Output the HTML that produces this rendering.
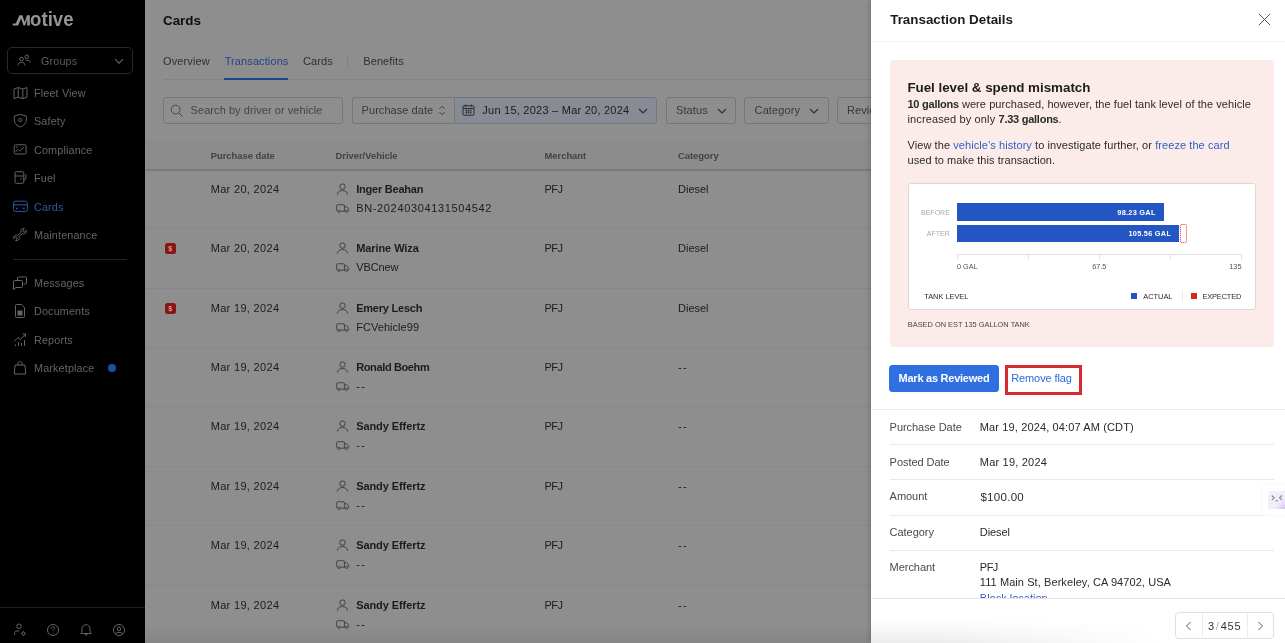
<!DOCTYPE html>
<html lang="en">
<head>
<meta charset="utf-8">
<title>Cards - Transactions</title>
<style>
*{box-sizing:border-box;margin:0;padding:0}
html,body{width:1285px;height:643px;overflow:hidden;background:#8e8e8e;font-family:"Liberation Sans",Arial,sans-serif;font-size:12px;color:#1a1a1a}
.abs{position:absolute}
#side,#main,#panel{will-change:transform}
#side{position:absolute;left:0;top:0;width:145px;height:643px;background:#000;color:#6f6f6f}
#main{position:absolute;left:145px;top:0;width:740px;height:643px;background:#8e8e8e;overflow:hidden}
#panel{position:absolute;left:871px;top:0;width:414px;height:643px;background:#fff;box-shadow:-1px 0 5px rgba(0,0,0,.2);overflow:hidden}
.nav{position:absolute;left:34px;font-size:10.8px;color:#6c6c6c;white-space:nowrap;line-height:14px;letter-spacing:.15px}
.nico{position:absolute;left:12px;width:16px;height:16px}
.tx{position:absolute;white-space:nowrap;font-size:11px;line-height:13px;color:#1c1c1c;letter-spacing:.1px}
.b{font-weight:700}
.th{position:absolute;white-space:nowrap;font-size:9.4px;line-height:12px;font-weight:700;color:#424242;top:150px}
.box{position:absolute;top:97px;height:27px;border:1px solid #777;border-radius:3px}
.row{position:absolute;left:0;width:740px;height:1px;background:#888}
.p{position:absolute;white-space:nowrap;font-size:11px;line-height:13px;color:#2a2a2a;letter-spacing:.08px}
.p b{font-weight:700;letter-spacing:-.25px}
.p a{color:#2f5fc4;text-decoration:none}
.lbl{color:#4a4a4a}
.hr{position:absolute;left:18.6px;width:384px;height:1px;background:#e9e9e9}
.c{position:absolute;white-space:nowrap;font-size:7.3px;line-height:9px;color:#555}
</style>
</head>
<body>
<div id="main">
<div class="tx b" style="left:18px;top:11.5px;font-size:13.4px;line-height:17px;color:#0e0e0e;letter-spacing:0">Cards</div>
<div class="tx" style="left:18px;top:55.4px;color:#303030;letter-spacing:0.12px">Overview</div>
<div class="tx" style="left:79.7px;top:55.4px;color:#22448c;letter-spacing:0.1px">Transactions</div>
<div class="tx" style="left:158px;top:55.4px;color:#303030;letter-spacing:0.12px">Cards</div>
<div class="tx" style="left:218.2px;top:55.4px;color:#303030;letter-spacing:0.12px">Benefits</div>
<div class="abs" style="left:18px;top:79px;width:740px;height:1px;background:#838383"></div>
<div class="abs" style="left:79px;top:78px;width:64px;height:2px;background:#22448c"></div>
<div class="abs" style="left:202px;top:54px;width:1px;height:15px;background:#828282"></div>
<div class="box" style="left:18px;width:180px"></div>
<svg class="abs" style="left:25px;top:104px" width="14" height="14" viewBox="0 0 14 14" fill="none" stroke="#484848" stroke-width="1"><circle cx="5.600" cy="5.600" r="4.400"/><path d="M8.800 8.800l4 4"/></svg>
<div class="tx" style="left:45.6px;top:104.4px;color:#444;letter-spacing:.06px">Search by driver or vehicle</div>
<div class="box" style="left:207px;width:102px;border-radius:3px 0 0 3px;border-right:none"></div>
<div class="tx" style="left:216.6px;top:104.4px;color:#383838;letter-spacing:.05px">Purchase date</div>
<svg class="abs" style="left:293px;top:104px" width="8" height="13" viewBox="0 0 8 13" fill="none" stroke="#3a3a3a" stroke-width="1"><path d="M1.500 4.800l2.500-2.500 2.500 2.500M1.500 8.200l2.500 2.500 2.500-2.500"/></svg>
<div class="box" style="left:309px;width:203px;border-radius:0 3px 3px 0;background:#868b94;border-color:#707783"></div>
<svg class="abs" style="left:317px;top:104px" width="13" height="12" viewBox="0 0 13 12" fill="none" stroke="#2e2e2e" stroke-width="1"><rect x="1" y="1.800" width="11" height="9.400" rx="1"/><path d="M1 4.500h11M3.700 .5v2.300M9.300 .5v2.300"/><path d="M3 6.300h7M3 8.300h7M4.500 5.500v4.500M6.500 5.500v4.500M8.500 5.500v4.500" stroke-width=".6"/></svg>
<div class="tx" style="left:337.3px;top:104.4px;color:#1c1c1c;letter-spacing:.24px">Jun 15, 2023 – Mar 20, 2024</div>
<svg class="abs" style="left:493px;top:108px" width="10" height="7" viewBox="0 0 10 7" fill="none" stroke="#2e2e2e" stroke-width="1.100"><path d="M1 1l4 4 4-4"/></svg>
<div class="box" style="left:521px;width:70px"></div>
<div class="tx" style="left:531px;top:104.4px;color:#383838">Status</div>
<svg class="abs" style="left:571.5px;top:108px" width="10" height="7" viewBox="0 0 10 7" fill="none" stroke="#2e2e2e" stroke-width="1.100"><path d="M1 1l4 4 4-4"/></svg>
<div class="box" style="left:599px;width:84.500px"></div>
<div class="tx" style="left:609.6px;top:104.4px;color:#383838;letter-spacing:.1px">Category</div>
<svg class="abs" style="left:664px;top:108px" width="10" height="7" viewBox="0 0 10 7" fill="none" stroke="#2e2e2e" stroke-width="1.100"><path d="M1 1l4 4 4-4"/></svg>
<div class="box" style="left:692px;width:84.500px"></div>
<div class="tx" style="left:702px;top:104.4px;color:#383838;letter-spacing:.1px">Reviewed</div>
<div class="abs" style="left:0;top:142px;width:740px;height:28px;background:#8c8c8c;border-top:1px solid #8a8a8a"></div>
<div class="abs" style="left:0;top:169px;width:740px;height:2px;background:#7a7a7a"></div>
<div class="th" style="left:65.7px">Purchase date</div>
<div class="th" style="left:190.5px">Driver/Vehicle</div>
<div class="th" style="left:399.5px">Merchant</div>
<div class="th" style="left:533px">Category</div>
<div class="tx" style="left:65.7px;top:183px;letter-spacing:.32px">Mar 20, 2024</div>
<svg class="abs" style="left:191.2px;top:183px" width="13" height="12" viewBox="0 0 13 12" fill="none" stroke="#404040" stroke-width="1"><circle cx="6.500" cy="3.600" r="2.700"/><path d="M1.300 11.500c.5-2.700 2.400-4 5.200-4s4.700 1.300 5.200 4"/></svg>
<div class="tx b" style="left:211.2px;top:183px;letter-spacing:-0.22px">Inger Beahan</div>
<svg class="abs" style="left:190.8px;top:203.8px" width="14" height="9.300" viewBox="0 0 15 10" fill="none" stroke="#404040" stroke-width="1"><path d="M2 7.700h-.5c-.5 0-.8-.3-.8-.8v-5.300c0-.5.300-.8.800-.8h6.700c.5 0 .8.300.8.800v6.100h-4.500"/><path d="M9 3h2.300c.4 0 .7.200.9.500l1.300 2c.1.200.2.400.2.600v.8c0 .5-.3.800-.8.800h-.4M9 7.700h1"/><circle cx="3.300" cy="8" r="1.200"/><circle cx="11.300" cy="8" r="1.200"/></svg>
<div class="tx" style="left:211.2px;top:202px;letter-spacing:0.65px">BN-20240304131504542</div>
<div class="tx" style="left:399.5px;top:183px;letter-spacing:-.5px">PFJ</div>
<div class="tx" style="left:533px;top:183px;letter-spacing:0px">Diesel</div>
<div class="row" style="top:228px"></div>
<div class="tx" style="left:65.7px;top:242px;letter-spacing:.32px">Mar 20, 2024</div>
<svg class="abs" style="left:191.2px;top:242px" width="13" height="12" viewBox="0 0 13 12" fill="none" stroke="#404040" stroke-width="1"><circle cx="6.500" cy="3.600" r="2.700"/><path d="M1.300 11.500c.5-2.700 2.400-4 5.200-4s4.700 1.300 5.200 4"/></svg>
<div class="tx b" style="left:211.2px;top:242px;letter-spacing:-0.08px">Marine Wiza</div>
<svg class="abs" style="left:190.8px;top:262.8px" width="14" height="9.300" viewBox="0 0 15 10" fill="none" stroke="#404040" stroke-width="1"><path d="M2 7.700h-.5c-.5 0-.8-.3-.8-.8v-5.300c0-.5.300-.8.800-.8h6.700c.5 0 .8.300.8.800v6.100h-4.500"/><path d="M9 3h2.300c.4 0 .7.200.9.500l1.300 2c.1.200.2.400.2.600v.8c0 .5-.3.800-.8.800h-.4M9 7.700h1"/><circle cx="3.300" cy="8" r="1.200"/><circle cx="11.300" cy="8" r="1.200"/></svg>
<div class="tx" style="left:211.2px;top:261px;letter-spacing:-0.1px">VBCnew</div>
<div class="tx" style="left:399.5px;top:242px;letter-spacing:-.5px">PFJ</div>
<div class="tx" style="left:533px;top:242px;letter-spacing:0px">Diesel</div>
<div class="abs" style="left:19.5px;top:243px;width:11.500px;height:11px;border-radius:2.500px;background:#8a1512;color:#c9a5a5;font-size:7px;font-weight:700;line-height:11px;text-align:center">$</div>
<div class="row" style="top:288px"></div>
<div class="tx" style="left:65.7px;top:302px;letter-spacing:.32px">Mar 19, 2024</div>
<svg class="abs" style="left:191.2px;top:302px" width="13" height="12" viewBox="0 0 13 12" fill="none" stroke="#404040" stroke-width="1"><circle cx="6.500" cy="3.600" r="2.700"/><path d="M1.300 11.500c.5-2.700 2.400-4 5.200-4s4.700 1.300 5.200 4"/></svg>
<div class="tx b" style="left:211.2px;top:302px;letter-spacing:-0.22px">Emery Lesch</div>
<svg class="abs" style="left:190.8px;top:322.8px" width="14" height="9.300" viewBox="0 0 15 10" fill="none" stroke="#404040" stroke-width="1"><path d="M2 7.700h-.5c-.5 0-.8-.3-.8-.8v-5.300c0-.5.300-.8.800-.8h6.700c.5 0 .8.300.8.800v6.100h-4.500"/><path d="M9 3h2.300c.4 0 .7.200.9.500l1.300 2c.1.200.2.400.2.600v.8c0 .5-.3.800-.8.800h-.4M9 7.700h1"/><circle cx="3.300" cy="8" r="1.200"/><circle cx="11.300" cy="8" r="1.200"/></svg>
<div class="tx" style="left:211.2px;top:321px;letter-spacing:0.05px">FCVehicle99</div>
<div class="tx" style="left:399.5px;top:302px;letter-spacing:-.5px">PFJ</div>
<div class="tx" style="left:533px;top:302px;letter-spacing:0px">Diesel</div>
<div class="abs" style="left:19.5px;top:303px;width:11.500px;height:11px;border-radius:2.500px;background:#8a1512;color:#c9a5a5;font-size:7px;font-weight:700;line-height:11px;text-align:center">$</div>
<div class="row" style="top:347px"></div>
<div class="tx" style="left:65.7px;top:361px;letter-spacing:.32px">Mar 19, 2024</div>
<svg class="abs" style="left:191.2px;top:361px" width="13" height="12" viewBox="0 0 13 12" fill="none" stroke="#404040" stroke-width="1"><circle cx="6.500" cy="3.600" r="2.700"/><path d="M1.300 11.500c.5-2.700 2.400-4 5.200-4s4.700 1.300 5.200 4"/></svg>
<div class="tx b" style="left:211.2px;top:361px;letter-spacing:-0.37px">Ronald Boehm</div>
<svg class="abs" style="left:190.8px;top:381.8px" width="14" height="9.300" viewBox="0 0 15 10" fill="none" stroke="#404040" stroke-width="1"><path d="M2 7.700h-.5c-.5 0-.8-.3-.8-.8v-5.300c0-.5.300-.8.800-.8h6.700c.5 0 .8.300.8.800v6.100h-4.500"/><path d="M9 3h2.300c.4 0 .7.200.9.500l1.300 2c.1.200.2.400.2.600v.8c0 .5-.3.800-.8.800h-.4M9 7.700h1"/><circle cx="3.300" cy="8" r="1.200"/><circle cx="11.300" cy="8" r="1.200"/></svg>
<div class="tx" style="left:211.2px;top:380px;letter-spacing:1.3px">--</div>
<div class="tx" style="left:399.5px;top:361px;letter-spacing:-.5px">PFJ</div>
<div class="tx" style="left:533px;top:361px;letter-spacing:1.3px">--</div>
<div class="row" style="top:406px"></div>
<div class="tx" style="left:65.7px;top:420px;letter-spacing:.32px">Mar 19, 2024</div>
<svg class="abs" style="left:191.2px;top:420px" width="13" height="12" viewBox="0 0 13 12" fill="none" stroke="#404040" stroke-width="1"><circle cx="6.500" cy="3.600" r="2.700"/><path d="M1.300 11.500c.5-2.700 2.400-4 5.200-4s4.700 1.300 5.200 4"/></svg>
<div class="tx b" style="left:211.2px;top:420px;letter-spacing:-0.08px">Sandy Effertz</div>
<svg class="abs" style="left:190.8px;top:440.8px" width="14" height="9.300" viewBox="0 0 15 10" fill="none" stroke="#404040" stroke-width="1"><path d="M2 7.700h-.5c-.5 0-.8-.3-.8-.8v-5.300c0-.5.300-.8.800-.8h6.700c.5 0 .8.300.8.800v6.100h-4.500"/><path d="M9 3h2.300c.4 0 .7.200.9.500l1.300 2c.1.200.2.400.2.600v.8c0 .5-.3.800-.8.800h-.4M9 7.700h1"/><circle cx="3.300" cy="8" r="1.200"/><circle cx="11.300" cy="8" r="1.200"/></svg>
<div class="tx" style="left:211.2px;top:439px;letter-spacing:1.3px">--</div>
<div class="tx" style="left:399.5px;top:420px;letter-spacing:-.5px">PFJ</div>
<div class="tx" style="left:533px;top:420px;letter-spacing:1.3px">--</div>
<div class="row" style="top:466px"></div>
<div class="tx" style="left:65.7px;top:480px;letter-spacing:.32px">Mar 19, 2024</div>
<svg class="abs" style="left:191.2px;top:480px" width="13" height="12" viewBox="0 0 13 12" fill="none" stroke="#404040" stroke-width="1"><circle cx="6.500" cy="3.600" r="2.700"/><path d="M1.300 11.500c.5-2.700 2.400-4 5.200-4s4.700 1.300 5.200 4"/></svg>
<div class="tx b" style="left:211.2px;top:480px;letter-spacing:-0.08px">Sandy Effertz</div>
<svg class="abs" style="left:190.8px;top:500.8px" width="14" height="9.300" viewBox="0 0 15 10" fill="none" stroke="#404040" stroke-width="1"><path d="M2 7.700h-.5c-.5 0-.8-.3-.8-.8v-5.300c0-.5.300-.8.800-.8h6.700c.5 0 .8.300.8.800v6.100h-4.500"/><path d="M9 3h2.300c.4 0 .7.200.9.500l1.300 2c.1.200.2.400.2.600v.8c0 .5-.3.800-.8.800h-.4M9 7.700h1"/><circle cx="3.300" cy="8" r="1.200"/><circle cx="11.300" cy="8" r="1.200"/></svg>
<div class="tx" style="left:211.2px;top:499px;letter-spacing:1.3px">--</div>
<div class="tx" style="left:399.5px;top:480px;letter-spacing:-.5px">PFJ</div>
<div class="tx" style="left:533px;top:480px;letter-spacing:1.3px">--</div>
<div class="row" style="top:525px"></div>
<div class="tx" style="left:65.7px;top:539px;letter-spacing:.32px">Mar 19, 2024</div>
<svg class="abs" style="left:191.2px;top:539px" width="13" height="12" viewBox="0 0 13 12" fill="none" stroke="#404040" stroke-width="1"><circle cx="6.500" cy="3.600" r="2.700"/><path d="M1.300 11.500c.5-2.700 2.400-4 5.200-4s4.700 1.300 5.200 4"/></svg>
<div class="tx b" style="left:211.2px;top:539px;letter-spacing:-0.08px">Sandy Effertz</div>
<svg class="abs" style="left:190.8px;top:559.8px" width="14" height="9.300" viewBox="0 0 15 10" fill="none" stroke="#404040" stroke-width="1"><path d="M2 7.700h-.5c-.5 0-.8-.3-.8-.8v-5.300c0-.5.300-.8.800-.8h6.700c.5 0 .8.300.8.800v6.100h-4.500"/><path d="M9 3h2.300c.4 0 .7.200.9.500l1.300 2c.1.200.2.400.2.600v.8c0 .5-.3.800-.8.800h-.4M9 7.700h1"/><circle cx="3.300" cy="8" r="1.200"/><circle cx="11.300" cy="8" r="1.200"/></svg>
<div class="tx" style="left:211.2px;top:558px;letter-spacing:1.3px">--</div>
<div class="tx" style="left:399.5px;top:539px;letter-spacing:-.5px">PFJ</div>
<div class="tx" style="left:533px;top:539px;letter-spacing:1.3px">--</div>
<div class="row" style="top:585px"></div>
<div class="tx" style="left:65.7px;top:599px;letter-spacing:.32px">Mar 19, 2024</div>
<svg class="abs" style="left:191.2px;top:599px" width="13" height="12" viewBox="0 0 13 12" fill="none" stroke="#404040" stroke-width="1"><circle cx="6.500" cy="3.600" r="2.700"/><path d="M1.300 11.500c.5-2.700 2.400-4 5.200-4s4.700 1.300 5.200 4"/></svg>
<div class="tx b" style="left:211.2px;top:599px;letter-spacing:-0.08px">Sandy Effertz</div>
<svg class="abs" style="left:190.8px;top:619.8px" width="14" height="9.300" viewBox="0 0 15 10" fill="none" stroke="#404040" stroke-width="1"><path d="M2 7.700h-.5c-.5 0-.8-.3-.8-.8v-5.300c0-.5.300-.8.800-.8h6.700c.5 0 .8.300.8.800v6.100h-4.500"/><path d="M9 3h2.300c.4 0 .7.200.9.500l1.300 2c.1.200.2.400.2.600v.8c0 .5-.3.800-.8.800h-.4M9 7.700h1"/><circle cx="3.300" cy="8" r="1.200"/><circle cx="11.300" cy="8" r="1.200"/></svg>
<div class="tx" style="left:211.2px;top:618px;letter-spacing:1.3px">--</div>
<div class="tx" style="left:399.5px;top:599px;letter-spacing:-.5px">PFJ</div>
<div class="tx" style="left:533px;top:599px;letter-spacing:1.3px">--</div>
<div class="row" style="top:644px"></div>
<div class="abs" style="left:0;top:625px;width:740px;height:18px;background:linear-gradient(to bottom,rgba(0,0,0,0),rgba(0,0,0,.06))"></div>
</div>
<div id="side">

<svg class="abs" style="left:0;top:0" width="90" height="34" viewBox="0 0 90 34">
<text x="30.1" y="25.6" font-family="Liberation Sans, sans-serif" font-weight="700" font-size="19.3" fill="#949494" textLength="43.4" lengthAdjust="spacingAndGlyphs">otive</text>
<path d="M12.7 23.4h3.100l3.600-8.200h3l2.300 7 2.200-7h2.900v10.400h-2.600v-6.600l-2.100 6.600h-1.600l-2.300-7-3.100 7h-5.400z" fill="#949494"/>
</svg>
<div class="abs" style="left:7px;top:47px;width:126px;height:27px;border:1px solid #282828;border-radius:5px"></div>
<svg class="abs" style="left:17px;top:54px" width="15" height="13" viewBox="0 0 15 13" fill="none" stroke="#646464" stroke-width="1"><circle cx="4.500" cy="5" r="1.800"/><path d="M1.200 11.500v-.8c0-1.400 1.200-2.300 3.300-2.300s3.300.9 3.300 2.300v.8"/><circle cx="9.800" cy="2.800" r="1.800"/><path d="M8.600 6.400c.4-.1.800-.2 1.200-.2 2.100 0 3.300.9 3.300 2.300v.6"/></svg>
<div class="nav" style="left:41px;top:54px;color:#5e5e5e">Groups</div>
<svg class="abs" style="left:114px;top:58px" width="10" height="7" viewBox="0 0 10 7" fill="none" stroke="#646464" stroke-width="1.100"><path d="M1 1.200l4 4 4-4"/></svg>
<svg class="nico" style="top:85px;color:#646464" viewBox="0 0 16 16" fill="none" stroke="#646464" stroke-width="1"><path d="M2 4l4.200-1.500 4.600 1.500 4.200-1.500v9.700l-4.200 1.500-4.600-1.500-4.200 1.500z"/><path d="M6.200 2.500v9.700M10.800 4v9.700"/></svg>
<div class="nav" style="top:86px;color:#646464">Fleet View</div>
<svg class="nico" style="top:113px;color:#646464" viewBox="0 0 16 16" fill="none" stroke="#646464" stroke-width="1"><path d="M8.300 1.300l6 1.800v4.200c0 3.200-2.500 5.300-6 6.700-3.500-1.400-6-3.500-6-6.700v-4.200z"/><circle cx="8.300" cy="7" r="1.600"/></svg>
<div class="nav" style="top:114px;color:#646464">Safety</div>
<svg class="nico" style="top:142px;color:#646464" viewBox="0 0 16 16" fill="none" stroke="#646464" stroke-width="1"><rect x="2.300" y="2.800" width="11.800" height="9.200" rx="1.300"/><path d="M4 9.800c1-2.600 1.800-2.800 2.700-1.600s1.700 1 2.500-.2l2.800-3.200"/><path d="M4 5.200h1.800"/></svg>
<div class="nav" style="top:143px;color:#646464">Compliance</div>
<svg class="nico" style="top:170px;color:#646464" viewBox="0 0 16 16" fill="none" stroke="#646464" stroke-width="1"><rect x="3" y="1.700" width="8.800" height="11.600" rx="1.300"/><path d="M3 6h8.800M8.300 8.800h1.400"/><path d="M11.800 9.800h.9c.7 0 1.200-.5 1.200-1.200v-4.200"/></svg>
<div class="nav" style="top:171px;color:#646464">Fuel</div>
<svg class="nico" style="top:199px;color:#2e5aa0" viewBox="0 0 16 16" fill="none" stroke="#2e5aa0" stroke-width="1"><rect x="1.500" y="2.200" width="13.800" height="10.200" rx="2"/><path d="M1.500 5.800h13.800"/><path d="M4.200 9.500h1.600M10.800 9.500h1.800" stroke-width="1.600"/></svg>
<div class="nav" style="top:200px;color:#2e5aa0">Cards</div>
<svg class="nico" style="top:227px;color:#646464" viewBox="0 0 16 16" fill="none" stroke="#646464" stroke-width="1"><path d="M10.500 7c1 .6 2.400.4 3.200-.5.700-.8.900-1.800.6-2.700l-1.600 1.600-1.500-.4-.4-1.500 1.600-1.600c-.9-.3-2-.1-2.700.6-.9.900-1.100 2.200-.5 3.200l-3.700 3.300c-1-.6-2.400-.4-3.200.5-.7.800-.9 1.800-.6 2.700l1.600-1.600 1.500.4.400 1.500-1.600 1.600c.9.300 2 .1 2.700-.6.900-.9 1.100-2.200.5-3.200z" transform="translate(0 -.5)"/></svg>
<div class="nav" style="top:228px;color:#646464">Maintenance</div>
<svg class="nico" style="top:275px;color:#646464" viewBox="0 0 16 16" fill="none" stroke="#646464" stroke-width="1"><path d="M5.500 5v-2.200c0-.5.400-.8.800-.8h7.400c.5 0 .8.400.8.800v5.400c0 .5-.4.800-.8.800h-2.200"/><path d="M2.300 5.500h7.400c.5 0 .8.400.8.800v5.400c0 .5-.4.800-.8.800h-5.700l-2.500 2v-8.200c0-.5.400-.8.800-.8z"/></svg>
<div class="nav" style="top:276px;color:#646464">Messages</div>
<svg class="nico" style="top:303px;color:#646464" viewBox="0 0 16 16" fill="none" stroke="#646464" stroke-width="1"><path d="M3.500 2.500c0-.6.400-1 1-1h5l3 3v9c0 .6-.4 1-1 1h-7c-.6 0-1-.4-1-1z"/><path d="M5.500 7.500h5v5h-5z" fill="currentColor" stroke="none"/></svg>
<div class="nav" style="top:304px;color:#646464">Documents</div>
<svg class="nico" style="top:332px;color:#646464" viewBox="0 0 16 16" fill="none" stroke="#646464" stroke-width="1"><path d="M2 9.500l4-4 2.500 2 5-5.500M10.500 2h3v3"/><path d="M3.500 14v-1.500M6.500 14v-4M9.500 14v-3M12.500 14v-6"/></svg>
<div class="nav" style="top:333px;color:#646464">Reports</div>
<svg class="nico" style="top:360px;color:#646464" viewBox="0 0 16 16" fill="none" stroke="#646464" stroke-width="1"><path d="M3 5h10l.7 9h-11.400z"/><path d="M5.800 5v-1.500c0-1 .9-1.800 2.200-1.800s2.200.8 2.200 1.800v1.500"/></svg>
<div class="nav" style="top:361px;color:#646464">Marketplace</div>
<div class="abs" style="left:13px;top:259px;width:114px;height:1px;background:#222"></div>
<div class="abs" style="left:108px;top:364px;width:8px;height:8px;border-radius:50%;background:#23509c"></div>
<div class="abs" style="left:0;top:607px;width:145px;height:1px;background:#1c1c1c"></div>
<svg class="abs" style="left:12px;top:622px" width="16" height="16" viewBox="0 0 16 16" fill="none" stroke="#646464" stroke-width="1"><circle cx="7" cy="4.300" r="2.300"/><path d="M2.500 13v-1.500c0-1.500 1-2.500 2.500-2.500h2"/><circle cx="11.500" cy="11.500" r="1.500"/><path d="M11.500 9.300v.7M11.500 13v.7M9.300 11.500h.7M13 11.500h.7M10 10l.5.500M12.500 12.500l.5.500M13 10l-.5.500M10.500 12.500l-.5.500"/></svg>
<svg class="abs" style="left:45px;top:622px" width="16" height="16" viewBox="0 0 16 16" fill="none" stroke="#646464" stroke-width="1"><circle cx="8" cy="8" r="5.500"/><path d="M6.300 6.500c0-1 .8-1.600 1.700-1.600s1.700.6 1.700 1.500c0 1.300-1.700 1.300-1.700 2.600M8 10.800v.7"/></svg>
<svg class="abs" style="left:78px;top:622px" width="16" height="16" viewBox="0 0 16 16" fill="none" stroke="#646464" stroke-width="1"><path d="M2.800 11.500c1-1 1.200-2 1.200-4.500 0-2.500 1.700-4.300 4-4.300s4 1.800 4 4.300c0 2.500.2 3.500 1.200 4.500z"/><path d="M6.800 12c.2.800.6 1.200 1.200 1.200s1-.4 1.200-1.200"/></svg>
<svg class="abs" style="left:110.5px;top:622px" width="16" height="16" viewBox="0 0 16 16" fill="none" stroke="#646464" stroke-width="1"><circle cx="8" cy="8" r="5.500"/><circle cx="8" cy="6.800" r="1.800"/><path d="M4.300 11.800c.8-1 2-1.400 3.700-1.400s2.900.4 3.700 1.400"/></svg>
</div>
<div id="panel">
<div class="p" style="left:19.2px;top:10.500px;font-size:13.4px;line-height:17px;font-weight:700;color:#1c1c1c;letter-spacing:0">Transaction Details</div>
<svg class="abs" style="left:387.3px;top:12.500px" width="13" height="13" viewBox="0 0 13 13" fill="none" stroke="#555" stroke-width="1"><path d="M.8.800l11.400 11.400M12.200.800l-11.400 11.400"/></svg>
<div class="abs" style="left:0;top:41px;width:414px;height:1px;background:#f2f2f2"></div>
<div class="abs" style="left:18.7px;top:60px;width:384px;height:287px;background:#fcece9;border-radius:3px"></div>
<div class="p" style="left:36.4px;top:78.500px;font-size:13.4px;line-height:17px;font-weight:700;color:#1c1c1c;letter-spacing:-.03px">Fuel level &amp; spend mismatch</div>
<div class="p" style="left:36.5px;top:97.600px;letter-spacing:.07px"><b>10 gallons</b> were purchased, however, the fuel tank level of the vehicle</div>
<div class="p" style="left:36.5px;top:112.700px;letter-spacing:.13px">increased by only <b>7.33 gallons</b>.</div>
<div class="p" style="left:36.5px;top:139.100px;letter-spacing:.075px">View the <a>vehicle’s history</a> to investigate further, or <a>freeze the card</a></div>
<div class="p" style="left:36.5px;top:154.200px;letter-spacing:.05px">used to make this transaction.</div>
<div class="abs" style="left:37px;top:183.300px;width:347.600px;height:127px;background:#fff;border:1px solid #e3d5d5;border-radius:3px"></div>
<div class="abs" style="left:86px;top:203.300px;width:206.500px;height:18px;background:#2355c3"></div>
<div class="abs" style="left:86px;top:224.600px;width:221.700px;height:17.600px;background:#2355c3"></div>
<div class="abs" style="left:309px;top:224px;width:6.500px;height:19px;border:1px dotted #d93025;border-radius:1.500px"></div>
<div class="c" style="right:335.2px;top:208px;color:#a8a8a8;font-size:7px">BEFORE</div>
<div class="c" style="right:335.2px;top:229px;color:#a8a8a8;font-size:7px">AFTER</div>
<div class="c" style="right:129.3px;top:208px;color:#fff;font-weight:700;font-size:7.400px;letter-spacing:.25px">98.23 GAL</div>
<div class="c" style="right:113.8px;top:229px;color:#fff;font-weight:700;font-size:7.400px;letter-spacing:.25px">105.56 GAL</div>
<div class="abs" style="left:86px;top:254.200px;width:285px;height:1px;background:#e2e2e2"></div>
<div class="abs" style="left:86px;top:254.200px;width:1px;height:6px;background:#e2e2e2"></div>
<div class="abs" style="left:157.2px;top:254.200px;width:1px;height:6px;background:#e2e2e2"></div>
<div class="abs" style="left:228.2px;top:254.200px;width:1px;height:6px;background:#e2e2e2"></div>
<div class="abs" style="left:299px;top:254.200px;width:1px;height:6px;background:#e2e2e2"></div>
<div class="abs" style="left:370px;top:254.200px;width:1px;height:6px;background:#e2e2e2"></div>
<div class="c" style="left:86px;top:261.500px">0 GAL</div>
<div class="c" style="left:208.3px;width:40px;text-align:center;top:261.500px">67.5</div>
<div class="c" style="right:43.5px;top:261.500px">135</div>
<div class="c" style="left:53.2px;top:291.500px;color:#2a2a2a;font-size:7.400px">TANK LEVEL</div>
<div class="abs" style="left:260.2px;top:293px;width:6px;height:6px;background:#2355c3"></div>
<div class="c" style="left:272.3px;top:291.500px;color:#2a2a2a;font-size:7.400px">ACTUAL</div>
<div class="abs" style="left:310.6px;top:291px;width:1px;height:10px;background:#e6e6e6"></div>
<div class="abs" style="left:319.7px;top:293px;width:6px;height:6px;background:#d3281e"></div>
<div class="c" style="left:331.4px;top:291.500px;color:#2a2a2a;font-size:7.400px;letter-spacing:-.12px">EXPECTED</div>
<div class="c" style="left:36.8px;top:319.800px;color:#444;font-size:7.400px">BASED ON EST 135 GALLON TANK</div>
<div class="abs" style="left:18.4px;top:365px;width:109.800px;height:26.600px;background:#2f6fdf;border-radius:3.500px"></div>
<div class="p" style="left:27.6px;top:371.500px;color:#fff;font-weight:700;letter-spacing:-.25px">Mark as Reviewed</div>
<div class="abs" style="left:133.8px;top:365px;width:77.200px;height:30px;border:3px solid #d62b30"></div>
<div class="p" style="left:140.2px;top:371.500px;color:#2f6ae0;letter-spacing:-.1px">Remove flag</div>
<div class="abs" style="left:0;top:409px;width:414px;height:1px;background:#e9e9e9"></div>
<div class="p lbl" style="left:18.6px;top:421px;letter-spacing:-.05px">Purchase Date</div>
<div class="p" style="left:108.8px;top:421px;letter-spacing:0.13px">Mar 19, 2024, 04:07 AM (CDT)</div>
<div class="hr" style="top:444px"></div>
<div class="p lbl" style="left:18.6px;top:456px;letter-spacing:-.05px">Posted Date</div>
<div class="p" style="left:108.8px;top:456px;letter-spacing:0.2px">Mar 19, 2024</div>
<div class="hr" style="top:478.5px"></div>
<div class="p lbl" style="left:18.6px;top:490px;letter-spacing:-.05px">Amount</div>
<div class="p" style="left:109.4px;top:491px;letter-spacing:.3px;font-size:11.500px">$100.00</div>
<div class="hr" style="top:514.5px"></div>
<div class="p lbl" style="left:18.6px;top:526px;letter-spacing:-.05px">Category</div>
<div class="p" style="left:108.8px;top:526px;letter-spacing:-0.1px">Diesel</div>
<div class="hr" style="top:549.5px"></div>
<div class="p lbl" style="left:18.6px;top:561px;letter-spacing:-.05px">Merchant</div>
<div class="p" style="left:108.8px;top:561px;letter-spacing:-0.5px">PFJ</div>
<div class="p" style="left:108.8px;top:576px;letter-spacing:.08px">111 Main St, Berkeley, CA 94702, USA</div>
<div class="p" style="left:108.8px;top:592px;letter-spacing:0"><a>Block location</a></div>
<div class="abs" style="left:0;top:598px;width:414px;height:45px;background:#fff;border-top:1px solid #e6e6e6"></div>
<div class="abs" style="left:0;top:620px;width:414px;height:23px;background:linear-gradient(to bottom,rgba(0,0,0,0),rgba(0,0,0,.075));-webkit-mask-image:linear-gradient(to right,#000 0%,#000 15%,transparent 70%);mask-image:linear-gradient(to right,#000 0%,#000 15%,transparent 70%)"></div>
<div class="abs" style="left:304px;top:611.800px;width:99px;height:27.200px;border:1px solid #e0e0e0;border-radius:4px"></div>
<div class="abs" style="left:331.3px;top:612px;width:1px;height:27px;background:#ececec"></div>
<div class="abs" style="left:375.9px;top:612px;width:1px;height:27px;background:#ececec"></div>
<svg class="abs" style="left:314px;top:620.500px" width="7" height="10" viewBox="0 0 7 10" fill="none" stroke="#555" stroke-width="1"><path d="M5.500 1l-4 4 4 4"/></svg>
<svg class="abs" style="left:386px;top:620.500px" width="7" height="10" viewBox="0 0 7 10" fill="none" stroke="#555" stroke-width="1"><path d="M1.500 1l4 4-4 4"/></svg>
<div class="p" style="left:336.9px;top:619.500px;letter-spacing:.8px;color:#333">3<span style="color:#aaa;margin:0 1px">/</span>455</div>
<div class="abs" style="left:390px;top:483px;width:30px;height:33px;background:#fff;border:1px solid #f8f8f8;border-radius:5px"></div>
<div class="abs" style="left:397px;top:491px;width:24px;height:17.700px;border-radius:2px;background:linear-gradient(135deg,#f3f1fa 0%,#f0edf9 55%,#c9a6ee 100%)"></div>
<svg class="abs" style="left:399px;top:493px" width="14" height="10" viewBox="0 0 14 10" fill="none" stroke="#85859a" stroke-width="1.100"><path d="M1.700 2.500l2.500 2.300-2.500 2.300M12 2.500l-2.500 2.300 2.500 2.300M5.600 7.300q1.200 1.200 2.400 0"/></svg>
</div>
</body>
</html>
